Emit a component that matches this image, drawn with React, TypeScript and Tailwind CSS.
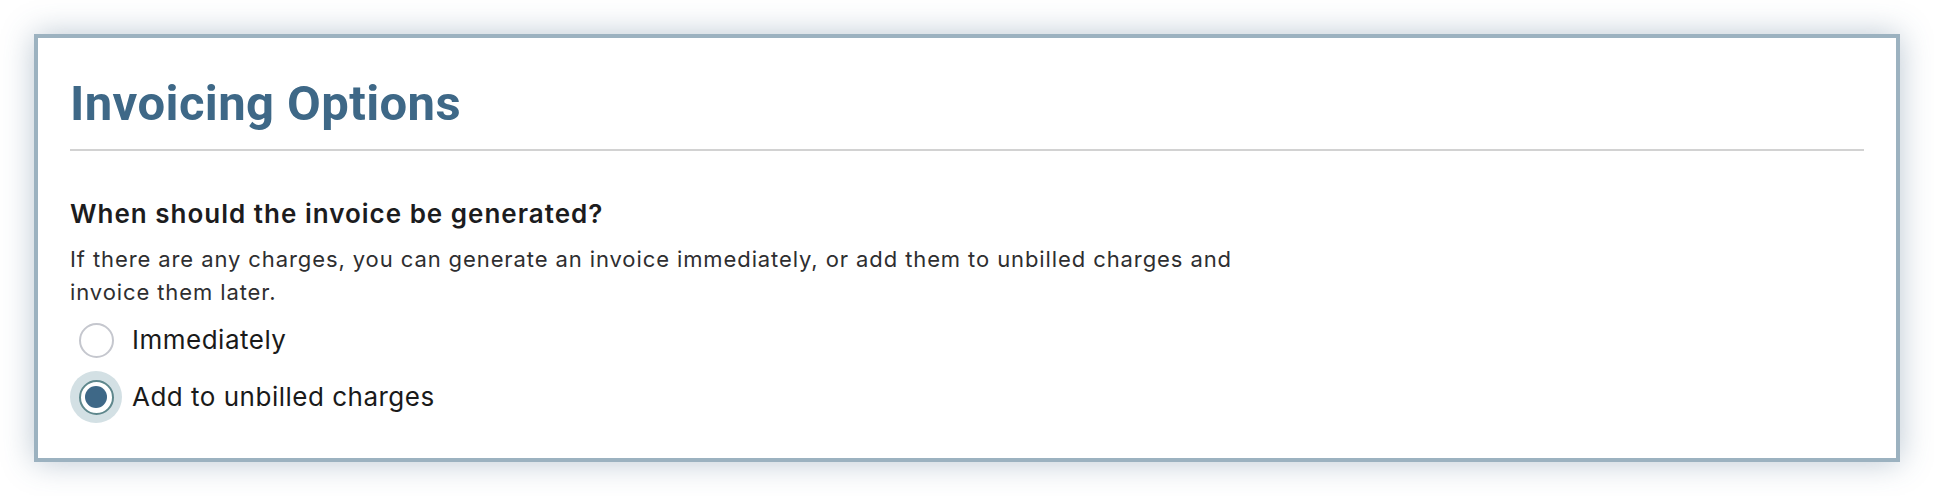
import { useState } from 'react';

type Option = { value: string; label: string };

const options: Option[] = [
  { value: 'immediately', label: 'Immediately' },
  { value: 'unbilled', label: 'Add to unbilled charges' },
];

function Radio({ checked }: { checked: boolean }) {
  return (
    <span
      className={`flex h-[52px] w-[52px] shrink-0 items-center justify-center rounded-full ${
        checked ? 'bg-[#d3e0e4]' : 'bg-transparent'
      }`}
    >
      <span
        className={`flex h-[35px] w-[35px] items-center justify-center rounded-full border-2 bg-white ${
          checked ? 'border-[#5e878c]' : 'border-[#c5c7ce]'
        }`}
      >
        {checked && <span className="h-[22px] w-[22px] rounded-full bg-[#3e6887]" />}
      </span>
    </span>
  );
}

export default function App() {
  const [selected, setSelected] = useState('unbilled');

  return (
    <div className="min-h-screen bg-white p-[34px] font-['Inter',sans-serif]">
      <div className="border-4 border-[#9cb2c0] bg-white px-8 pt-[38px] pb-[35px] shadow-[0_0_30px_rgba(60,95,125,0.35)]">
        <h1 className="font-['Roboto',sans-serif] text-[49px] leading-[56px] font-bold tracking-[0.4px] text-[#3e6887]">
          Invoicing Options
        </h1>
        <div className="mt-[17px] h-[2px] bg-[#d2d2d2]" />

        <h2 className="mt-[47px] text-[26px] leading-[32px] font-semibold tracking-[1px] text-[#1c1c1e]">
          When should the invoice be generated?
        </h2>
        <p className="mt-[13px] max-w-[1210px] text-[22px] leading-[33px] tracking-[0.9px] text-[#2e2e30]">
          If there are any charges, you can generate an invoice immediately, or add them to unbilled
          charges and invoice them later.
        </p>

        <div className="mt-[5px] flex flex-col gap-[5px]">
          {options.map((opt) => (
            <label
              key={opt.value}
              className="flex cursor-pointer items-center gap-[10px]"
              onClick={() => setSelected(opt.value)}
            >
              <Radio checked={selected === opt.value} />
              <span className="text-[26px] leading-[32px] tracking-[0.5px] text-[#1a1a1a]">
                {opt.label}
              </span>
            </label>
          ))}
        </div>
      </div>
    </div>
  );
}
